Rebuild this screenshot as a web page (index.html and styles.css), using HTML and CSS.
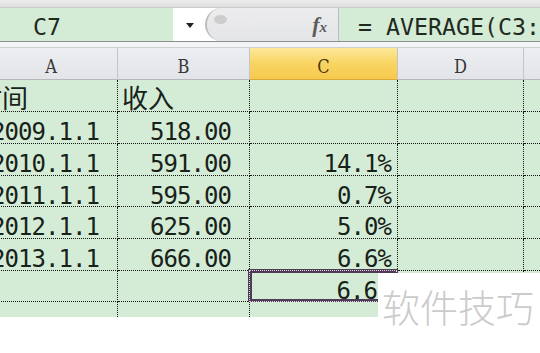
FILE: index.html
```html
<!DOCTYPE html>
<html>
<head>
<meta charset="utf-8">
<link rel="stylesheet" href="styles.css">
</head>
<body>
<div class="app">
  <div class="topstrip"></div>
  <div class="fbar">
    <div class="namebox">C7</div>
    <div class="ddzone"><span class="arrow"></span></div>
    <div class="fxzone"><span class="knob"></span><span class="fx"><i class="f">f</i><i class="x">x</i></span></div>
    <div class="formula">= AVERAGE(C3:</div>
  </div>
  <div class="gap"></div>
  <div class="sheet">
    <div class="hd">A</div>
    <div class="hd">B</div>
    <div class="hd sel">C</div>
    <div class="hd">D</div>
    <div class="hd e"></div>

    <div class="c r1 a"><span class="cjk cjk-a">时间</span></div>
    <div class="c r1"><span class="cjk cjk-b">收入</span></div>
    <div class="c r1"></div>
    <div class="c r1"></div>
    <div class="c e r1"></div>

    <div class="c a">2009.1.1</div>
    <div class="c nb">518.00</div>
    <div class="c"></div>
    <div class="c"></div>
    <div class="c e"></div>

    <div class="c a">2010.1.1</div>
    <div class="c nb">591.00</div>
    <div class="c nc">14.1%</div>
    <div class="c"></div>
    <div class="c e"></div>

    <div class="c a">2011.1.1</div>
    <div class="c nb">595.00</div>
    <div class="c nc">0.7%</div>
    <div class="c"></div>
    <div class="c e"></div>

    <div class="c a">2012.1.1</div>
    <div class="c nb">625.00</div>
    <div class="c nc">5.0%</div>
    <div class="c"></div>
    <div class="c e"></div>

    <div class="c a">2013.1.1</div>
    <div class="c nb">666.00</div>
    <div class="c nc">6.6%</div>
    <div class="c"></div>
    <div class="c e"></div>

    <div class="c"></div>
    <div class="c"></div>
    <div class="c nsel">6.6<div class="selbox"></div></div>
    <div class="c"></div>
    <div class="c e"></div>

    <div class="c last"></div>
    <div class="c last"></div>
    <div class="c last"></div>
    <div class="c last"></div>
    <div class="c e last"></div>
  </div>
  <div class="watermark">软件技巧</div>
</div>
</body>
</html>
```

FILE: styles.css
```css
html, body {
  margin: 0;
  padding: 0;
  background: #ffffff;
}

.app {
  position: relative;
  width: 540px;
  height: 353px;
  overflow: hidden;
  background: #ffffff;
}

.topstrip {
  height: 7px;
  background: linear-gradient(#ececec, #dedede);
  border-bottom: 1px solid #cbcbcb;
}

.fbar {
  display: flex;
  height: 33px;
  border-bottom: 1px solid #8e8e8e;
  font-family: "DejaVu Sans Mono", monospace;
  font-size: 23.25px;
  color: #1f2a1f;
}

.namebox {
  flex: none;
  width: 173px;
  box-sizing: border-box;
  background: #d4ecd5;
  padding: 4px 0 0 33px;
  line-height: 29px;
}

.ddzone {
  flex: none;
  width: 32px;
  background: #ffffff;
  display: flex;
  align-items: center;
  justify-content: center;
  padding-left: 2px;
  box-sizing: border-box;
}

.arrow {
  width: 0;
  height: 0;
  border-left: 4.5px solid transparent;
  border-right: 4.5px solid transparent;
  border-top: 5px solid #222222;
  margin-top: 2px;
}

.fxzone {
  flex: none;
  position: relative;
  width: 134px;
  box-sizing: border-box;
  background: linear-gradient(#ececee, #e4e5e8);
  border-left: 2px solid #bdbdbd;
  border-right: 1px solid #b8bcc0;
  border-radius: 18px 0 0 18px;
  display: flex;
  align-items: center;
  justify-content: flex-end;
  padding-right: 11px;
}

.knob {
  position: absolute;
  left: 7px;
  top: 7px;
  width: 13px;
  height: 9px;
  border-radius: 50%;
  background: #cdcdcd;
}

.fx {
  font-family: "Liberation Serif", serif;
  color: #5c5c5c;
  font-weight: bold;
  line-height: 1;
  display: flex;
  align-items: baseline;
}

.fx .f {
  font-size: 22px;
}

.fx .x {
  font-size: 15px;
}

.formula {
  flex: 1;
  background: #d4ecd5;
  padding: 4px 0 0 19px;
  line-height: 29px;
  white-space: nowrap;
  overflow: hidden;
}

.gap {
  height: 5px;
  background: #f3f4f5;
  border-bottom: 1px solid #cdcfd2;
}

.sheet {
  display: grid;
  margin-left: -15px;
  width: 579px;
  grid-template-columns: 133px 132px 148px 126px 40px;
  grid-template-rows: 32px 32px 32px 32px 31px 32px 32px 31px 15px;
}

.hd {
  box-sizing: border-box;
  background: linear-gradient(#eceef1, #e2e4e8);
  border-right: 1px solid #c3c5c9;
  border-bottom: 1px solid #b5b7bb;
  font-family: "DejaVu Serif", serif;
  font-stretch: condensed;
  font-size: 18px;
  color: #363636;
  text-align: center;
  line-height: 31px;
  padding-top: 3px;
}

.hd.sel {
  background: linear-gradient(#fde99a, #f9d463 50%, #f6c94c);
  border-bottom-color: #d9a93a;
  color: #4a3a10;
}

.hd.e {
  border-right: none;
}

.c {
  position: relative;
  box-sizing: border-box;
  background: #d4ecd5;
  border-right: 1px dotted #141414;
  border-bottom: 1px dotted #141414;
  font-family: "DejaVu Sans Mono", "Noto Sans CJK SC", monospace;
  font-size: 24px;
  letter-spacing: -0.95px;
  color: #18221a;
  line-height: 22px;
  padding-top: 9px;
  white-space: nowrap;
}

.c.e {
  border-right: none;
}

.c.last {
  border-bottom: none;
}

.c.a {
  padding-left: 6px;
}

.c.r1 {
  padding-top: 4px;
  line-height: 26px;
}

.cjk {
  font-family: "Noto Sans CJK SC", sans-serif;
  font-size: 26px;
  letter-spacing: 0;
  display: inline-block;
}

.cjk-a {
  margin-left: -15px;
}

.cjk-b {
  margin-left: 4px;
}

.nb {
  text-align: right;
  padding-right: 18px;
}

.nc {
  text-align: right;
  padding-right: 6px;
}

.nsel {
  text-align: right;
  padding-right: 20px;
}

.selbox {
  position: absolute;
  left: -2px;
  top: -2px;
  width: 150px;
  height: 34px;
  box-sizing: border-box;
  border: 4px solid #4e3b56;
  outline: 1px dotted #ead4e8;
  outline-offset: -2.5px;
}

.watermark {
  position: absolute;
  left: 378px;
  top: 273px;
  right: 0;
  bottom: 0;
  background: #ffffff;
  font-family: "Noto Sans CJK SC", sans-serif;
  font-weight: 300;
  font-size: 38px;
  line-height: 38px;
  color: #cbcbcb;
  padding: 14px 0 0 4px;
  white-space: nowrap;
}
```
